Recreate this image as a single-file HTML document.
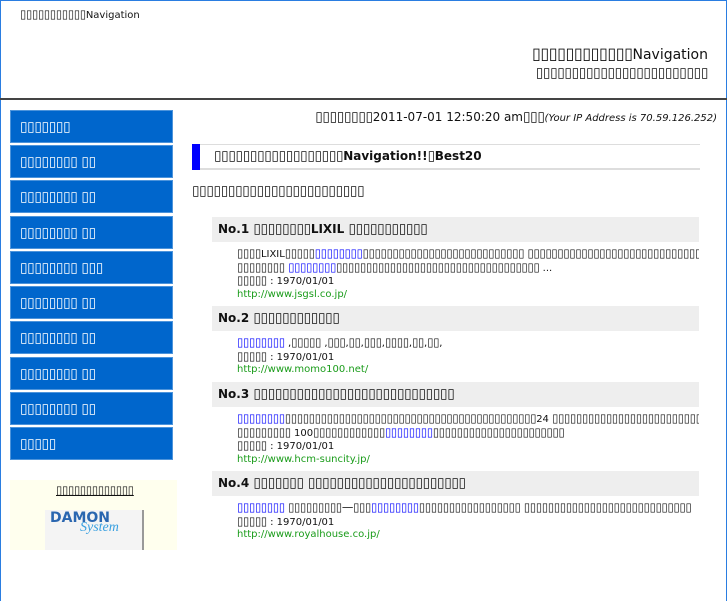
<!DOCTYPE html>
<html><head><meta charset="utf-8"><style>
body{margin:0;width:727px;height:545px;overflow:hidden;background:#fff;font-family:"DejaVu Sans","Liberation Sans",sans-serif;color:#111;position:relative}
.frame{position:absolute;left:0;top:0;width:725px;height:600px;border-left:1px solid #2a7de1;border-top:1px solid #2a7de1;border-right:1px solid #2a7de1}
.a{position:absolute;white-space:nowrap}
.j{font-size:1.15em;letter-spacing:-0.03em;line-height:1}
.nav{position:absolute;left:10px;width:163px;height:33px;background:#0066cc;border:1px solid #4d94db;box-sizing:border-box;color:#fff;font-size:12px;line-height:33px;padding-left:9px}
.bar{position:absolute;left:212px;width:487px;height:25px;background:#eee;font-size:12px;font-weight:bold;line-height:25px;padding-left:6px;box-sizing:border-box;overflow:hidden;white-space:nowrap}
.bar .j{font-weight:normal}
.tx{position:absolute;left:237px;width:462px;overflow:hidden;font-size:10px;line-height:12.7px;white-space:nowrap}
.b{color:#00f}.g{color:#1a9c1a}
</style></head><body>
<div class="frame"></div>
<div class="a" style="left:20px;top:9px;font-size:10px"><span class="j">▯▯▯▯▯▯▯▯▯▯▯</span>Navigation</div>
<div class="a" style="right:19px;top:46px;font-size:14px"><span class="j">▯▯▯▯▯▯▯▯▯▯▯▯</span>Navigation</div>
<div class="a" style="right:19px;top:66px;font-size:12px"><span class="j">▯▯▯▯▯▯▯▯▯▯▯▯▯▯▯▯▯▯▯▯▯▯▯▯</span></div>
<div class="a" style="left:0;top:98px;width:727px;height:2px;background:#444"></div>

<div class="nav" style="top:110px"><span class="j">▯▯▯▯▯▯▯</span></div>
<div class="nav" style="top:145px"><span class="j">▯▯▯▯▯▯▯▯ ▯▯</span></div>
<div class="nav" style="top:180px"><span class="j">▯▯▯▯▯▯▯▯ ▯▯</span></div>
<div class="nav" style="top:216px"><span class="j">▯▯▯▯▯▯▯▯ ▯▯</span></div>
<div class="nav" style="top:251px"><span class="j">▯▯▯▯▯▯▯▯ ▯▯▯</span></div>
<div class="nav" style="top:286px"><span class="j">▯▯▯▯▯▯▯▯ ▯▯</span></div>
<div class="nav" style="top:321px"><span class="j">▯▯▯▯▯▯▯▯ ▯▯</span></div>
<div class="nav" style="top:357px"><span class="j">▯▯▯▯▯▯▯▯ ▯▯</span></div>
<div class="nav" style="top:392px"><span class="j">▯▯▯▯▯▯▯▯ ▯▯</span></div>
<div class="nav" style="top:427px"><span class="j">▯▯▯▯▯</span></div>

<div class="a" style="left:10px;top:480px;width:167px;height:70px;background:#ffffee"></div>
<div class="a" style="left:56px;top:485px;font-size:10px;text-decoration:underline"><span class="j">▯▯▯▯▯▯▯▯▯▯▯▯▯</span></div>
<div class="a" style="left:45px;top:510px;width:97px;height:40px;background:#f4f4f4;border-right:2px solid #999"></div>
<div class="a" style="left:50px;top:510px;font-size:14px;font-weight:bold;color:#2a66b0">DAMON</div>
<div class="a" style="left:80px;top:520px;font-size:14px;font-style:italic;color:#3aa0e0;font-family:'Liberation Serif',serif">System</div>

<div class="a" style="right:10px;top:110px;font-size:12px"><span class="j">▯▯▯▯▯▯▯▯</span>2011-07-01 12:50:20 am<span class="j">▯▯▯</span><i style="font-size:10px">(Your IP Address is 70.59.126.252)</i></div>
<div class="a" style="left:192px;top:144px;width:508px;height:26px;border-top:1px solid #ddd;border-bottom:2px solid #ddd;box-sizing:border-box"></div>
<div class="a" style="left:192px;top:144px;width:8px;height:26px;background:#00f"></div>
<div class="a" style="left:214px;top:149px;font-size:12px;font-weight:bold"><span class="j" style="font-weight:normal">▯▯▯▯▯▯▯▯▯▯▯▯▯▯▯▯▯▯</span>Navigation!!<span class="j" style="font-weight:normal">▯</span>Best20</div>
<div class="a" style="left:192px;top:184px;font-size:12px"><span class="j">▯▯▯▯▯▯▯▯▯▯▯▯▯▯▯▯▯▯▯▯▯▯▯▯</span></div>

<div class="bar" style="top:217px">No.1 <span class="j">▯▯▯▯▯▯▯▯</span>LIXIL <span class="j">▯▯▯▯▯▯▯▯▯▯▯</span></div>
<div class="tx" style="top:248px"><span class="j">▯▯▯▯</span>LIXIL<span class="j">▯▯▯▯▯</span><span class="b j">▯▯▯▯▯▯▯▯</span><span class="j">▯▯▯▯▯▯▯▯▯▯▯▯▯▯▯▯▯▯▯▯▯▯▯▯▯▯▯ ▯▯▯▯▯▯▯▯▯▯▯▯▯▯▯▯▯▯▯▯▯▯▯▯▯▯▯▯▯▯▯▯▯▯▯▯▯</span><br><span class="j">▯▯▯▯▯▯▯▯ </span><span class="b j">▯▯▯▯▯▯▯▯</span><span class="j">▯▯▯▯▯▯▯▯▯▯▯▯▯▯▯▯▯▯▯▯▯▯▯▯▯▯▯▯▯▯▯▯▯▯</span> ...<br><span class="j">▯▯▯▯▯</span> : 1970/01/01<br><span class="g">http://www.jsgsl.co.jp/</span></div>

<div class="bar" style="top:306px">No.2 <span class="j">▯▯▯▯▯▯▯▯▯▯▯▯</span></div>
<div class="tx" style="top:337px"><span class="b j">▯▯▯▯▯▯▯▯</span> ,<span class="j">▯▯▯▯▯</span> ,<span class="j">▯▯▯</span>,<span class="j">▯▯</span>,<span class="j">▯▯▯</span>,<span class="j">▯▯▯▯</span>,<span class="j">▯▯</span>,<span class="j">▯▯</span>,<br><span class="j">▯▯▯▯▯</span> : 1970/01/01<br><span class="g">http://www.momo100.net/</span></div>

<div class="bar" style="top:382px">No.3 <span class="j">▯▯▯▯▯▯▯▯▯▯▯▯▯▯▯▯▯▯▯▯▯▯▯▯▯▯▯▯</span></div>
<div class="tx" style="top:413px"><span class="b j">▯▯▯▯▯▯▯▯</span><span class="j">▯▯▯▯▯▯▯▯▯▯▯▯▯▯▯▯▯▯▯▯▯▯▯▯▯▯▯▯▯▯▯▯▯▯▯▯▯▯▯▯▯▯</span>24 <span class="j">▯▯▯▯▯▯▯▯▯▯▯▯▯▯▯▯▯▯▯▯▯▯▯▯▯▯▯▯▯▯▯▯</span><br><span class="j">▯▯▯▯▯▯▯▯▯</span> 100<span class="j">▯▯▯▯▯▯▯▯▯▯▯▯</span><span class="b j">▯▯▯▯▯▯▯▯</span><span class="j">▯▯▯▯▯▯▯▯▯▯▯▯▯▯▯▯▯▯▯▯▯▯</span><br><span class="j">▯▯▯▯▯</span> : 1970/01/01<br><span class="g">http://www.hcm-suncity.jp/</span></div>

<div class="bar" style="top:471px">No.4 <span class="j">▯▯▯▯▯▯▯</span> <span class="j">▯▯▯▯▯▯▯▯▯▯▯▯▯▯▯▯▯▯▯▯▯▯</span></div>
<div class="tx" style="top:502px"><span class="b j">▯▯▯▯▯▯▯▯</span> <span class="j">▯▯▯▯▯▯▯▯▯—▯▯▯</span><span class="b j">▯▯▯▯▯▯▯▯</span><span class="j">▯▯▯▯▯▯▯▯▯▯▯▯▯▯▯▯▯ ▯▯▯▯▯▯▯▯▯▯▯▯▯▯▯▯▯▯▯▯▯▯▯▯▯▯▯▯</span><br><span class="j">▯▯▯▯▯</span> : 1970/01/01<br><span class="g">http://www.royalhouse.co.jp/</span></div>
</body></html>
